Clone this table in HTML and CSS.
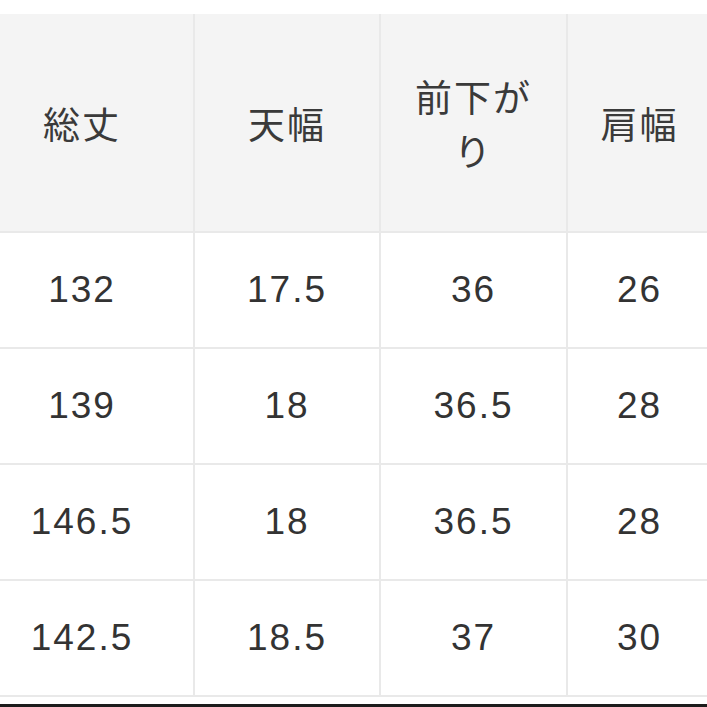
FILE: index.html
```html
<!DOCTYPE html>
<html lang="ja">
<head>
<meta charset="utf-8">
<title>サイズ表</title>
<link rel="stylesheet" href="styles.css">
</head>
<body>
<div class="size-table">
  <div class="cell head first">総丈</div>
  <div class="cell head">天幅</div>
  <div class="cell head">前下がり</div>
  <div class="cell head last">肩幅</div>

  <div class="cell first">132</div>
  <div class="cell">17.5</div>
  <div class="cell">36</div>
  <div class="cell last">26</div>

  <div class="cell first">139</div>
  <div class="cell">18</div>
  <div class="cell">36.5</div>
  <div class="cell last">28</div>

  <div class="cell first">146.5</div>
  <div class="cell">18</div>
  <div class="cell">36.5</div>
  <div class="cell last">28</div>

  <div class="cell first">142.5</div>
  <div class="cell">18.5</div>
  <div class="cell">37</div>
  <div class="cell last">30</div>
</div>
<div class="bottom-rule"></div>
</body>
</html>
```

FILE: styles.css
```css
html, body {
  margin: 0;
  padding: 0;
  background: #ffffff;
}

body {
  padding-top: 14px;
  height: 707px;
  box-sizing: border-box;
  overflow: hidden;
  font-family: "Liberation Sans", "Noto Sans CJK JP", sans-serif;
  color: #333333;
}

.size-table {
  display: grid;
  grid-template-columns: 193px 184px 185px 1fr;
  grid-template-rows: 217px repeat(4, 114px);
  gap: 2px;
  padding-bottom: 2px;
  background: #e9e9e9;
}

.cell {
  display: flex;
  align-items: center;
  justify-content: center;
  text-align: center;
  background: #ffffff;
  font-size: 37px;
  letter-spacing: 2px;
  line-height: 54px;
  padding: 0 18px;
  box-sizing: border-box;
}

.cell.head {
  background: #f4f4f4;
  font-family: "Noto Sans CJK JP", "Liberation Sans", sans-serif;
  font-weight: 400;
  color: #3a3a3a;
}

.cell.first {
  padding-left: 0;
  padding-right: 29px;
}

.cell.last {
  padding-left: 4px;
  padding-right: 0;
}

.bottom-rule {
  margin-top: 7px;
  height: 3px;
  background: #1c1c1c;
}
```
